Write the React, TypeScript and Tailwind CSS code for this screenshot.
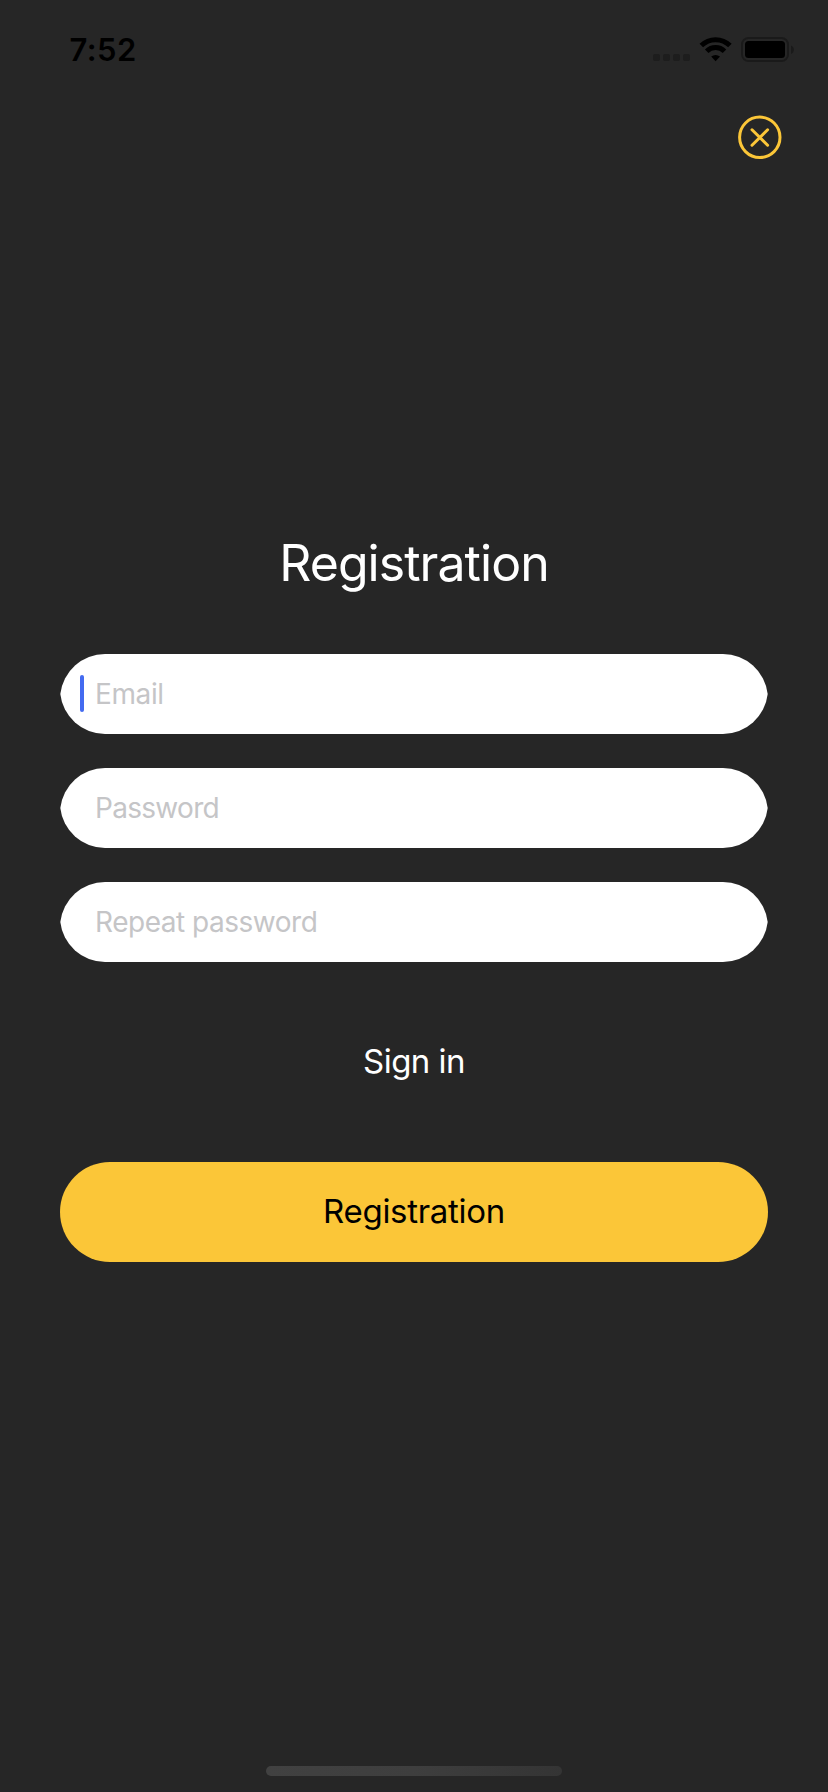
import React from "react";

function StatusBar() {
  return (
    <header className="flex h-[98px] items-start justify-between pl-[69.5px] pr-[33px]">
      <time className="pt-[30px] text-[31px] leading-[40px] font-semibold tracking-[0.4px] text-black">7:52</time>
      <svg className="mt-[36px]" width="144" height="28" viewBox="651 36 144 28" fill="none">
        <g fill="#1d1d1d">
          <rect x="653" y="54" width="7" height="7" rx="2" />
          <rect x="663" y="54" width="7" height="7" rx="2" />
          <rect x="673" y="54" width="7" height="7" rx="2" />
          <rect x="683" y="54" width="7" height="7" rx="2" />
        </g>
        <g stroke="#000" strokeWidth="5">
          <path d="M701.3 45.6A20.2 20.2 0 0 1 729.9 45.6" />
          <path d="M706.7 51.3A12.6 12.6 0 0 1 724.5 51.3" />
        </g>
        <path d="M715.6 61.2L711.2 56.6A6.5 6.5 0 0 1 720 56.6Z" fill="#000" />
        <rect x="742" y="38" width="46" height="23" rx="6.5" stroke="#1a1a1a" strokeWidth="2" />
        <rect x="745" y="41" width="40" height="17" rx="3.5" fill="#000" />
        <path d="M791 45.5C794.8 47 794.8 52.5 791 54Z" fill="#1a1a1a" />
      </svg>
    </header>
  );
}

type FieldProps = { label: string; type: string; tracking: string; focused?: boolean };

function Field({ label, type, tracking, focused = false }: FieldProps) {
  return (
    <label className="flex h-20 items-center bg-white pl-5 [clip-path:path('M45_0H663A45_45_0_0_1_707.7_40A45_45_0_0_1_663_80H45A45_45_0_0_1_0.3_40A45_45_0_0_1_45_0Z')]">
      <span className={focused ? "mb-[2px] h-[37px] w-1 rounded-full bg-[#446bf0]" : "h-[37px] w-1"} />
      <input
        type={type}
        placeholder={label}
        className={`ml-[11px] min-w-0 flex-1 bg-transparent text-[28px] leading-[40px] outline-none placeholder:text-[#c5c5c7] ${tracking}`}
      />
    </label>
  );
}

export default function App() {
  return (
    <main className="flex h-[1792px] w-[828px] flex-col bg-[#262626] font-['Inter',sans-serif] text-white">
      <StatusBar />
      <div className="flex justify-end pt-[17px] pr-[46px]">
        <button aria-label="Close">
          <svg width="44" height="44" viewBox="0 0 44 44" fill="none" stroke="#fbc638" strokeWidth="3">
            <circle cx="21.8" cy="22.3" r="20.2" />
            <path d="M14 14.8L29.6 30.2M29.6 14.8L14 30.2" strokeLinecap="round" />
          </svg>
        </button>
      </div>
      <h1 className="mt-[372px] text-center text-[50px] leading-[64px] tracking-[-0.95px]">Registration</h1>
      <form className="mt-[59px] flex flex-col px-[60px]">
        <div className="flex flex-col gap-[34px]">
          <Field label="Email" type="email" tracking="tracking-[-0.4px]" focused />
          <Field label="Password" type="password" tracking="tracking-[-0.7px]" />
          <Field label="Repeat password" type="password" tracking="tracking-[-0.48px]" />
        </div>
        <button type="button" className="mt-[78px] h-[42px] self-center text-[33px] leading-[42px] tracking-[-0.55px]">Sign in</button>
        <button type="button" className="mt-[80px] h-[100px] rounded-full bg-[#fbc638] pb-[2px] text-[33px] leading-[42px] tracking-[-0.3px] text-black">
          Registration
        </button>
      </form>
      <div className="mt-auto mb-4 h-[10px] w-[296px] self-center rounded-full bg-linear-to-r from-[#414141] via-[#3e3e3e] to-[#343434]" />
    </main>
  );
}
